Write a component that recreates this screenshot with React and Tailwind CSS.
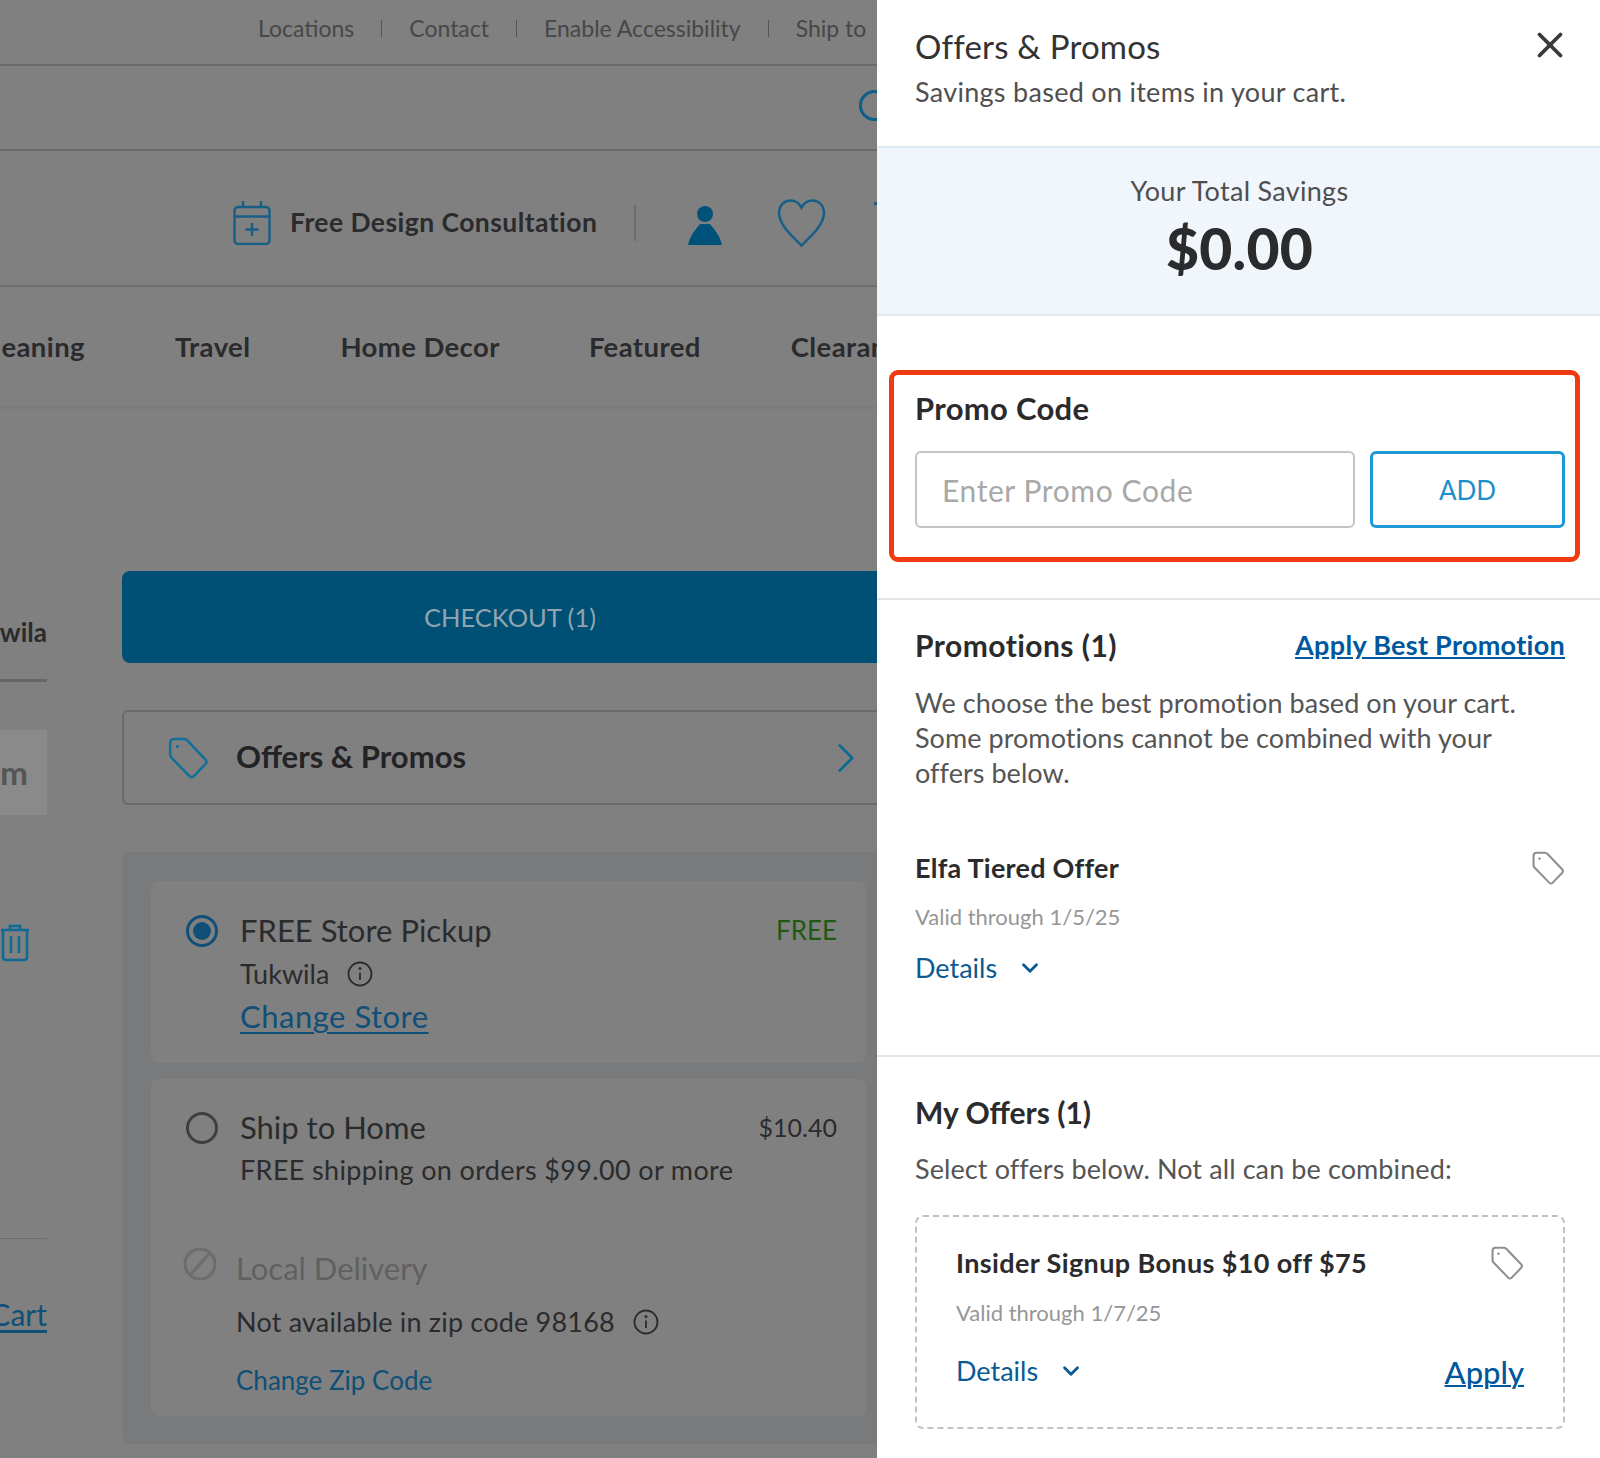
import { X, ChevronRight, ChevronDown } from 'lucide-react';

function TagIcon({ className }) {
  return (
    <svg viewBox="0 0 40 40" fill="none" stroke="currentColor" strokeWidth="2.4" strokeLinejoin="round" className={className}>
      <path d="M3 5.5C3 3.5 4.5 2 6.5 2H16.5C17.8 2 18.7 2.6 19.5 3.5L36.6 21.5C37.8 22.8 37.8 24.4 36.8 25.6L25.6 37.2C24.4 38.4 22.6 38.4 21.4 37.2L4.4 19.8C3.4 18.8 3 17.8 3 16.5Z" />
      <circle cx="10" cy="9" r="1" fill="currentColor" strokeWidth="1" />
    </svg>
  );
}

function InfoIcon({ className }) {
  return (
    <svg viewBox="0 0 26 26" fill="none" stroke="currentColor" strokeWidth="1.8" className={className}>
      <circle cx="13" cy="13" r="11.5" />
      <path d="M13 11.5V19" />
      <circle cx="13" cy="7.5" r="0.6" fill="currentColor" />
    </svg>
  );
}

function CalendarIcon({ className }) {
  return (
    <svg viewBox="0 0 38 44" fill="none" stroke="currentColor" strokeWidth="2.4" className={className}>
      <rect x="1.5" y="6" width="35" height="37" rx="3.5" />
      <path d="M1.5 15.5H36.5M10 0V6M28 0V6M19 22V35M12.5 28.5H25.5" />
    </svg>
  );
}

function NavSep() {
  return <span className="mx-[27px] w-px h-[17px] shrink-0 bg-[#555555]" />;
}

function Row({ className, children }) {
  return <div className={`flex items-center whitespace-nowrap ${className}`}>{children}</div>;
}

function PageBehind() {
  return (
    <div className="w-[877px] h-full shrink-0 overflow-hidden bg-[#808080] text-[#2b2b2d]">
      {/* Top links */}
      <Row className="h-[66px] pl-[258px] pb-[7px] border-b-2 border-[#696969] text-[23px] text-[#474747]">
        <span>Locations</span>
        <NavSep />
        <span>Contact</span>
        <NavSep />
        <span>Enable Accessibility</span>
        <NavSep />
        <span>Ship to</span>
      </Row>

      {/* Search row */}
      <div className="h-[85px] border-b-2 border-[#696969] flex items-center justify-end">
        <div className="w-[31px] h-[31px] -mr-[13px] rounded-full border-[3px] border-[#0d5f86] -mt-[5px]" />
      </div>

      {/* Utility row */}
      <Row className="h-[136px] border-b-2 border-[#6e6e6e] pl-[232px] pt-[10px]">
        <CalendarIcon className="shrink-0 w-[40px] h-[44px] text-[#175f85]" />
        <span className="shrink-0 w-[309px] ml-[18px] text-[26.5px] tracking-[0.45px] font-bold">Free Design Consultation</span>
        <span className="shrink-0 ml-[35px] w-[2px] h-[36px] bg-[#6c6c6c]" />
        <svg viewBox="0 0 34 40" className="shrink-0 ml-[52px] mt-[4px] w-[34px] h-[40px] fill-[#00527a]">
          <circle cx="17" cy="9" r="8" />
          <path d="M12 19H22C25 23 32 30 34 40H0C2 30 9 23 12 19Z" />
        </svg>
        <svg viewBox="0 0 48 48" fill="none" strokeWidth="2.4" className="shrink-0 ml-[55px] w-[49px] h-[50px] stroke-[#175f85]">
          <path d="M24 46C15 37 2 26 2 14C2 6 8 2 13 2C18 2 22 5 24 9C26 5 30 2 35 2C40 2 46 6 46 14C46 26 33 37 24 46Z" />
        </svg>
        <span className="shrink-0 ml-[48px] w-[10px] h-[3px] bg-[#175f85] -mt-[40px]" />
      </Row>

      {/* Category nav */}
      <div className="h-[119px] pt-[1px] flex items-center whitespace-nowrap text-[27.5px] tracking-[0.4px] font-bold shadow-[0_3px_3px_rgba(0,0,0,0.04)]">
        <div className="w-[85px] flex justify-end shrink-0"><span>eaning</span></div>
        <span className="ml-[90px]">Travel</span>
        <span className="ml-[90px]">Home Decor</span>
        <span className="ml-[89px]">Featured</span>
        <span className="ml-[90px]">Clearance</span>
      </div>

      <div className="flex pt-[165px]">
        {/* Sliver of the cart column */}
        <div className="w-[47px] shrink-0 overflow-hidden">
          <div className="h-[111px] border-b-[3px] border-[#666666] flex items-end justify-end pb-[27px] text-[26px] font-bold">
            <span>wila</span>
          </div>
          <div className="mt-[48px] h-[85px] bg-[#8a8a8a] flex items-center justify-end pr-[19px] text-[33px] font-bold text-[#555555]">
            <span>m</span>
          </div>
          <svg viewBox="0 0 32 38" fill="none" stroke="#0d6a94" strokeWidth="2.6" className="mt-[109px] -ml-[2px] w-[34px] h-[38px]">
            <path d="M2 6H30M11 6V2H21V6M4 6V33C4 35 5 36 7 36H25C27 36 28 35 28 33V6M12 12V29M20 12V29" />
          </svg>
          <div className="mt-[276px] h-px bg-[#6e6e6e]" />
          <div className="mt-[53px] flex justify-end text-[30px]">
            <span className="underline underline-offset-4 text-[#0f4f78]">Cart</span>
          </div>
        </div>

        {/* Right cart column */}
        <div className="ml-[75px] w-[755px] shrink-0">
          <div className="h-[92px] rounded-l-[8px] bg-[#004f74] flex items-center justify-center pl-[21px] pt-[1px] text-[25.5px] text-[#8fa5b0]">
            <span>CHECKOUT (1)</span>
          </div>
          <div className="mt-[47px] h-[95px] rounded-l-[6px] border-2 border-r-0 border-[#6a6a6a] flex items-center pl-[43px] pr-[6px]">
            <TagIcon className="w-[42px] h-[42px] text-[#126f9a]" />
            <span className="ml-[27px] pb-[2px] text-[31px] font-bold text-[#232325]">Offers &amp; Promos</span>
            <ChevronRight className="ml-auto w-[50px] h-[50px] text-[#0d6a94]" strokeWidth={1.3} />
          </div>

          <div className="mt-[47px] h-[592px] bg-[#797a7c] rounded-l-[8px] pt-[29px] pl-[29px] pr-[11px]">
            <div className="h-[182px] bg-[#808080] rounded-[8px] flex pl-[35px] pr-[29px] pt-[26px]">
              <div className="w-[32px] h-[32px] mt-[8px] rounded-full border-[3px] border-[#0f4f78] flex items-center justify-center">
                <div className="w-[18px] h-[18px] rounded-full bg-[#0f4f78]" />
              </div>
              <div className="ml-[22px] flex-1">
                <div className="flex justify-between">
                  <span className="text-[31px] leading-[46px]">FREE Store Pickup</span>
                  <span className="text-[26px] leading-[46px] text-[#1f5a12]">FREE</span>
                </div>
                <div className="flex items-center h-[42px] text-[27px]">
                  <span>Tukwila</span>
                  <InfoIcon className="ml-[18px] w-[26px] h-[26px]" />
                </div>
                <div className="-mt-[2px] text-[31px] leading-[46px] tracking-[0.5px] underline decoration-2 underline-offset-4 text-[#0f4f78]">Change Store</div>
              </div>
            </div>

            <div className="mt-[16px] h-[337px] bg-[#808080] rounded-[8px] pt-[25px]">
              <div className="flex pl-[35px] pr-[29px]">
                <div className="w-[32px] h-[32px] mt-[8px] rounded-full border-[3px] border-[#3f3f3f]" />
                <div className="ml-[22px] flex-1">
                  <div className="flex justify-between">
                    <span className="text-[31px] leading-[46px]">Ship to Home</span>
                    <span className="text-[25px] leading-[46px]">$10.40</span>
                  </div>
                  <div className="text-[27px] leading-[40px] tracking-[0.35px]">FREE shipping on orders $99.00 or more</div>
                </div>
              </div>
              <div className="flex pl-[32px] mt-[55px]">
                <svg viewBox="0 0 34 34" fill="none" stroke="#6c6c6c" strokeWidth="3" className="w-[34px] h-[34px] mt-[2px]">
                  <circle cx="17" cy="17" r="15" />
                  <path d="M8 27L26 7" />
                </svg>
                <div className="ml-[19px] flex-1">
                  <div className="text-[31px] leading-[46px] text-[#606060]">Local Delivery</div>
                  <div className="flex items-center mt-[9px] h-[44px] text-[27px] tracking-[0.2px]">
                    <span>Not available in zip code 98168</span>
                    <InfoIcon className="ml-[18px] w-[26px] h-[26px]" />
                  </div>
                  <div className="mt-[16px] text-[26px] leading-[40px] text-[#0f4f78]">Change Zip Code</div>
                </div>
              </div>
            </div>
          </div>
        </div>
      </div>
    </div>
  );
}

function OfferDetails() {
  return (
    <div className="flex items-center text-[27px] text-[#0b5a94]">
      <span>Details</span>
      <ChevronDown className="ml-[20px] w-[26px] h-[26px]" strokeWidth={2.6} />
    </div>
  );
}

function OffersPanel() {
  return (
    <div className="flex-1 h-full bg-white text-[#2b2b2d]">
      {/* Header */}
      <div className="h-[146px] pl-[38px] pr-[36px] pt-[23px] flex justify-between">
        <div>
          <div className="text-[33px] leading-[46px] tracking-[0.2px] text-[#333333]">Offers &amp; Promos</div>
          <div className="mt-[1px] text-[27px] leading-[44px] tracking-[0.29px] text-[#4f4f4f]">Savings based on items in your cart.</div>
        </div>
        <X className="w-[42px] h-[42px] -mr-[7px] mt-[1px] text-[#3a3a3a]" strokeWidth={2.2} />
      </div>

      {/* Savings */}
      <div className="h-[170px] bg-[#f0f6fb] border-y-2 border-[#dcebf2] flex flex-col items-center pl-[2px] pt-[23px]">
        <div className="text-[27px] leading-[40px] tracking-[0.3px] text-[#4f4f4f]">Your Total Savings</div>
        <div className="mt-[5px] text-[57px] leading-[64px] tracking-[0.2px] font-black text-[#2b2b2d]">$0.00</div>
      </div>

      {/* Promo code, with the red highlight round it */}
      <div className="mt-[54px] ml-[12px] mr-[20px] h-[192px] rounded-[9px] border-[5px] border-[#f03a12] pl-[21px] pr-[10px] pt-[11px]">
        <div className="text-[31px] leading-[44px] tracking-[0.3px] font-bold">Promo Code</div>
        <div className="mt-[21px] flex gap-[15px]">
          <div className="w-[440px] h-[77px] rounded-[6px] border-2 border-[#c4c4c4] flex items-center pl-[25px] pt-[2px] text-[30px] tracking-[0.6px] text-[#a8a8a8]">
            Enter Promo Code
          </div>
          <div className="w-[195px] h-[77px] rounded-[6px] border-[3px] border-[#1d9ad6] flex items-center justify-center pt-[1px] text-[26px] text-[#1d8fc8]">
            ADD
          </div>
        </div>
      </div>

      {/* Promotions */}
      <div className="mt-[36px] h-[457px] border-t-2 border-[#e4e4e4] pl-[38px] pr-[35px] pt-[23px]">
        <div className="flex items-center justify-between h-[44px]">
          <span className="text-[30px] tracking-[0.45px] font-bold">Promotions (1)</span>
          <span className="text-[27px] tracking-[0.3px] font-bold underline text-[#00579e]">Apply Best Promotion</span>
        </div>
        <p className="mt-[18px] text-[27px] leading-[35px] tracking-[0.05px] text-[#555555]">
          We choose the best promotion based on your cart.<br />
          Some promotions cannot be combined with your<br />
          offers below.
        </p>
        <div className="mt-[60px] flex items-center justify-between h-[36px]">
          <span className="text-[27px] tracking-[0.25px] font-bold">Elfa Tiered Offer</span>
          <TagIcon className="w-[34px] h-[34px] text-[#8e8e8e]" />
        </div>
        <div className="mt-[15px] text-[22px] leading-[32px] text-[#969696]">Valid through 1/5/25</div>
        <div className="mt-[15px]"><OfferDetails /></div>
      </div>

      {/* My offers */}
      <div className="border-t-2 border-[#e4e4e4] pl-[38px] pr-[35px] pt-[33px]">
        <div className="text-[30px] leading-[44px] font-bold">My Offers (1)</div>
        <div className="mt-[15px] text-[27px] leading-[40px] tracking-[0.1px] text-[#555555]">Select offers below. Not all can be combined:</div>
        <div className="mt-[26px] h-[214px] rounded-[8px] border-2 border-dashed border-[#c2c2c2] px-[39px] pt-[28px]">
          <div className="flex items-center justify-between h-[36px]">
            <span className="text-[27px] tracking-[0.38px] font-bold">Insider Signup Bonus $10 off $75</span>
            <TagIcon className="w-[34px] h-[34px] text-[#8e8e8e]" />
          </div>
          <div className="mt-[16px] text-[22px] leading-[32px] text-[#969696]">Valid through 1/7/25</div>
          <div className="mt-[18px] flex items-center justify-between">
            <OfferDetails />
            <span className="pt-[2px] text-[31px] font-medium underline decoration-2 text-[#00579e]">Apply</span>
          </div>
        </div>
      </div>
    </div>
  );
}

export default function App() {
  return (
    <div className="flex w-[1600px] h-[1458px] overflow-hidden font-['Lato',sans-serif]">
      <PageBehind />
      <OffersPanel />
    </div>
  );
}
